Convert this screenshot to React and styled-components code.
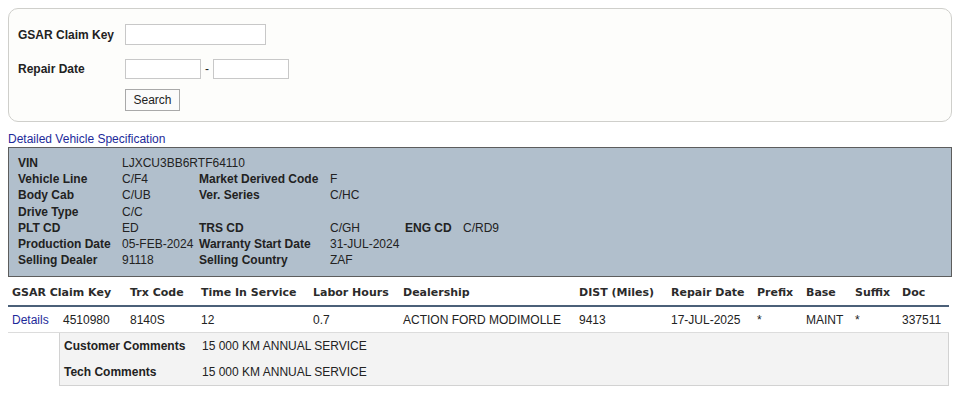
import React from 'react';
import styled, {createGlobalStyle} from 'styled-components';

const GlobalStyle = createGlobalStyle`
  body {
    margin: 8px;
    background: #ffffff;
    font-family: "Liberation Sans", Arial, sans-serif;
    font-size: 12px;
    color: #222222;
  }
`;

const SearchPanel = styled.div`
  border: 1px solid #cfcfcb;
  border-radius: 10px;
  background: #fdfdfb;
  padding: 15px 9px 9px;
  height: 88px;
`;

const FormRow = styled.div`
  display: flex;
  align-items: center;
  margin-bottom: ${p => p.$gap || 0}px;
`;

const FormLabel = styled.label`
  width: 107px;
  font-weight: bold;
  font-size: 12px;
`;

const TextInput = styled.input`
  box-sizing: border-box;
  width: ${p => p.$w}px;
  height: ${p => p.$h || 21}px;
  border: 1px solid #c8c8c8;
  background: #ffffff;
  padding: 0 3px;
  font-family: inherit;
  font-size: 12px;
`;

const Dash = styled.span`
  width: 12px;
  text-align: center;
`;

const SearchButton = styled.button`
  margin-left: 107px;
  box-sizing: border-box;
  width: 55px;
  height: 22px;
  border: 1px solid #a9a9a9;
  background: #fbfbfb;
  font-family: "Liberation Sans", Arial, sans-serif;
  font-size: 12px;
  color: #222;
  padding: 0;
`;

const SectionLink = styled.a`
  display: block;
  margin-top: 9px;
  line-height: 16px;
  color: #1d2a9a;
  text-decoration: none;
  font-size: 12px;
`;

const SpecBox = styled.div`
  background: #b1bfcc;
  border: 1px solid #5d5d5d;
  padding: 7px 9px;
`;

const SpecTable = styled.table`
  border-collapse: collapse;
  table-layout: fixed;
  td {
    padding: 0;
    height: 16.3px;
    line-height: 15px;
    white-space: nowrap;
  }
`;

const SpecLabel = styled.td`
  font-weight: bold;
`;

const SpecValue = styled.td``;

const ClaimTable = styled.table`
  margin-top: 4px;
  width: 941px;
  border-collapse: collapse;
  table-layout: fixed;
`;

const HeadCell = styled.th`
  text-align: left;
  padding: 5px 4px;
  height: 14px;
  line-height: 14px;
  font-family: "DejaVu Sans", Verdana, sans-serif;
  font-size: 11px;
  font-weight: bold;
  color: #2b2b2b;
  white-space: nowrap;
  border-bottom: 2px solid #4b6078;
`;

const DataRow = styled.tr`
  td {
    padding: 0 4px;
    height: 25px;
    white-space: nowrap;
    border-bottom: 1px solid #dcdcdc;
  }
`;

const DetailsLink = styled.a`
  color: #1d2a9a;
  text-decoration: none;
`;

const CommentsCell = styled.td`
  padding: 0;
`;

const CommentsBox = styled.table`
  width: 100%;
  border-collapse: collapse;
  background: #f3f3f3;
  border: 1px solid #d2d2d2;
  border-top: none;
  td {
    height: 26px;
    padding: 0 4px;
    white-space: nowrap;
  }
`;

const CommentLabel = styled.td`
  width: 130px;
  font-weight: bold;
`;

const specRows = [
    [['VIN', 'LJXCU3BB6RTF64110']],
    [['Vehicle Line', 'C/F4'], ['Market Derived Code', 'F']],
    [['Body Cab', 'C/UB'], ['Ver. Series', 'C/HC']],
    [['Drive Type', 'C/C']],
    [['PLT CD', 'ED'], ['TRS CD', 'C/GH'], ['ENG CD', 'C/RD9']],
    [['Production Date', '05-FEB-2024'], ['Warranty Start Date', '31-JUL-2024']],
    [['Selling Dealer', '91118'], ['Selling Country', 'ZAF']],
];

const colWidths = [51, 67, 71, 112, 90, 176, 92, 86, 49, 49, 47, 51];

const headers = ['Trx Code', 'Time In Service', 'Labor Hours', 'Dealership', 'DIST (Miles)',
    'Repair Date', 'Prefix', 'Base', 'Suffix', 'Doc'];

const claim = ['4510980', '8140S', '12', '0.7', 'ACTION FORD MODIMOLLE', '9413',
    '17-JUL-2025', '*', 'MAINT', '*', '337511'];

const App = () => {
    return (
        <>
            <GlobalStyle/>
            {/* 검색 영역 */}
            <SearchPanel>
                <FormRow $gap={14}>
                    <FormLabel>GSAR Claim Key</FormLabel>
                    <TextInput type="text" $w={141}/>
                </FormRow>
                <FormRow $gap={10}>
                    <FormLabel>Repair Date</FormLabel>
                    <TextInput type="text" $w={76} $h={20}/>
                    <Dash>-</Dash>
                    <TextInput type="text" $w={76} $h={20}/>
                </FormRow>
                <FormRow>
                    <SearchButton type="button">Search</SearchButton>
                </FormRow>
            </SearchPanel>

            <SectionLink href="#">Detailed Vehicle Specification</SectionLink>

            {/* 차량 정보 */}
            <SpecBox>
                <SpecTable>
                    <colgroup>
                        <col style={{width: 104}}/>
                        <col style={{width: 77}}/>
                        <col style={{width: 131}}/>
                        <col style={{width: 75}}/>
                        <col style={{width: 58}}/>
                        <col style={{width: 60}}/>
                    </colgroup>
                    <tbody>
                    {specRows.map((row, i) => (
                        <tr key={i}>
                            {row.map(([label, value]) => (
                                <React.Fragment key={label}>
                                    <SpecLabel>{label}</SpecLabel>
                                    <SpecValue colSpan={row.length === 1 ? 5 : 1}>{value}</SpecValue>
                                </React.Fragment>
                            ))}
                        </tr>
                    ))}
                    </tbody>
                </SpecTable>
            </SpecBox>

            {/* 클레임 목록 */}
            <ClaimTable>
                <colgroup>
                    {colWidths.map((w, i) => <col key={i} style={{width: w}}/>)}
                </colgroup>
                <thead>
                <tr>
                    <HeadCell colSpan={2}>GSAR Claim Key</HeadCell>
                    {headers.map(h => <HeadCell key={h}>{h}</HeadCell>)}
                </tr>
                </thead>
                <tbody>
                <DataRow>
                    <td><DetailsLink href="#">Details</DetailsLink></td>
                    {claim.map((v, i) => <td key={i}>{v}</td>)}
                </DataRow>
                <tr>
                    <td/>
                    <CommentsCell colSpan={11}>
                        <CommentsBox>
                            <tbody>
                            <tr>
                                <CommentLabel>Customer Comments</CommentLabel>
                                <td>15 000 KM ANNUAL SERVICE</td>
                            </tr>
                            <tr>
                                <CommentLabel>Tech Comments</CommentLabel>
                                <td>15 000 KM ANNUAL SERVICE</td>
                            </tr>
                            </tbody>
                        </CommentsBox>
                    </CommentsCell>
                </tr>
                </tbody>
            </ClaimTable>
        </>
    );
};

export default App;
